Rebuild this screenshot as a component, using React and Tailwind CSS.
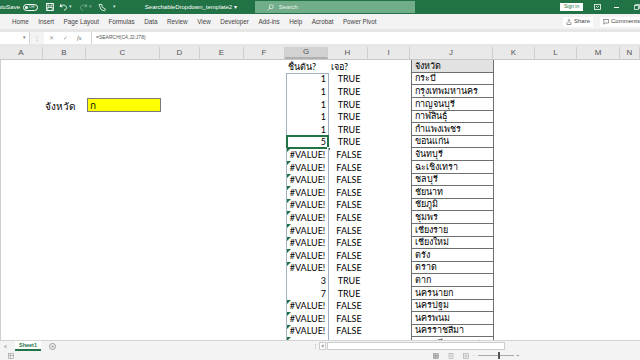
import React from 'react'

const cols = [
  { id: 'A', w: 'w-[43px]' },
  { id: 'B', w: 'w-[43px]' },
  { id: 'C', w: 'w-[74px]' },
  { id: 'D', w: 'w-[40px]' },
  { id: 'E', w: 'w-[44px]' },
  { id: 'F', w: 'w-[41px]' },
  { id: 'G', w: 'w-[43px]' },
  { id: 'H', w: 'w-[40px]' },
  { id: 'I', w: 'w-[42px]' },
  { id: 'J', w: 'w-[83px]' },
  { id: 'K', w: 'w-[42px]' },
  { id: 'L', w: 'w-[42px]' },
  { id: 'M', w: 'w-[43px]' },
  { id: 'N', w: 'w-[20px]' },
]

const V = '#VALUE!'
const rows = [
  [null, null, 'จังหวัด'],
  ['1', 'TRUE', 'กระบี่'],
  ['1', 'TRUE', 'กรุงเทพมหานคร'],
  ['1', 'TRUE', 'กาญจนบุรี'],
  ['1', 'TRUE', 'กาฬสินธุ์'],
  ['1', 'TRUE', 'กำแพงเพชร'],
  ['5', 'TRUE', 'ขอนแก่น'],
  [V, 'FALSE', 'จันทบุรี'],
  [V, 'FALSE', 'ฉะเชิงเทรา'],
  [V, 'FALSE', 'ชลบุรี'],
  [V, 'FALSE', 'ชัยนาท'],
  [V, 'FALSE', 'ชัยภูมิ'],
  [V, 'FALSE', 'ชุมพร'],
  [V, 'FALSE', 'เชียงราย'],
  [V, 'FALSE', 'เชียงใหม่'],
  [V, 'FALSE', 'ตรัง'],
  [V, 'FALSE', 'ตราด'],
  ['3', 'TRUE', 'ตาก'],
  ['7', 'TRUE', 'นครนายก'],
  [V, 'FALSE', 'นครปฐม'],
  [V, 'FALSE', 'นครพนม'],
  [V, 'FALSE', 'นครราชสีมา'],
  [V, 'FALSE', 'นครศรีธรรมราช'],
]

// row heights average ~12.6px like the zoomed-down sheet
const heights = ['h-[13px]', 'h-[12px]', 'h-[13px]', 'h-[13px]', 'h-[12px]']

function TitleBar() {
  return (
    <div className="h-[14px] bg-[#217346] flex items-center text-white text-[6px] shrink-0">
      <span className="-ml-[6px]">AutoSave</span>
      <div className="ml-[3px] w-[15px] h-[7px] rounded-full border border-white flex items-center pl-[1px] gap-[1px]">
        <div className="w-[3px] h-[3px] rounded-full bg-white" />
        <span className="text-[4px] leading-none">Off</span>
      </div>
      <svg className="ml-[8px]" width="8" height="8" viewBox="0 0 8 8" fill="none" stroke="white" strokeWidth="0.8">
        <rect x="0.5" y="0.5" width="7" height="7" />
        <rect x="2" y="0.5" width="4" height="2.5" />
        <rect x="1.8" y="4.5" width="4.4" height="3" />
      </svg>
      <svg className="ml-[5px]" width="9" height="8" viewBox="0 0 9 8" fill="none" stroke="white" strokeWidth="0.9">
        <path d="M2 1 L1 3.5 L3.6 3.8" />
        <path d="M1.3 3.4 C3 1.5 7 1.5 7.5 4.5 C7.6 6 6.5 7 5 7.2" />
      </svg>
      <span className="text-[5px] ml-[1px] opacity-80">▾</span>
      <svg className="ml-[7px] opacity-40" width="9" height="8" viewBox="0 0 9 8" fill="none" stroke="white" strokeWidth="0.9">
        <path d="M7 1 L8 3.5 L5.4 3.8" />
        <path d="M7.7 3.4 C6 1.5 2 1.5 1.5 4.5 C1.4 6 2.5 7 4 7.2" />
      </svg>
      <span className="text-[5px] ml-[1px] opacity-40">▾</span>
      <svg className="ml-[6px]" width="9" height="9" viewBox="0 0 9 9" fill="none" stroke="white" strokeWidth="0.8">
        <path d="M1 1.5 L4 1.5 L4 4 L7.5 6 L6.5 8 L3 6.5 L2 4 Z" />
      </svg>
      <span className="text-[5px] ml-[6px] opacity-80">▾</span>
      <div className="ml-[29px] w-[90px] text-[6px] whitespace-nowrap">SearchableDropdown_template2 ▾</div>
      <div className="ml-[20px] w-[161px] h-[12px] bg-[#72ad89] flex items-center pl-[12px] text-[#e9f3ec]">
        <svg width="7" height="7" viewBox="0 0 7 7" fill="none" stroke="#e9f3ec" strokeWidth="0.8">
          <circle cx="4.3" cy="2.7" r="2" />
          <path d="M2.9 4.1 L0.6 6.4" />
        </svg>
        <span className="ml-[5px] text-[6px]">Search</span>
      </div>
      <div className="ml-[145px] w-[23px] h-[8px] bg-white text-[#217346] text-[5px] flex items-center justify-center">Sign in</div>
      <svg className="ml-[11px]" width="7" height="6" viewBox="0 0 7 6" fill="none" stroke="white" strokeWidth="0.8">
        <rect x="0.5" y="0.5" width="6" height="5" />
        <path d="M2 2 L3.5 3.5 L5 2" />
      </svg>
      <div className="ml-[13px] w-[5px] h-[1px] bg-white" />
      <svg className="ml-[15px]" width="6" height="6" viewBox="0 0 6 6" fill="none" stroke="white" strokeWidth="0.7">
        <rect x="0.5" y="1.5" width="4" height="4" />
        <path d="M1.5 1.5 V0.5 H5.5 V4.5 H4.5" />
      </svg>
    </div>
  )
}

function RibbonTabs() {
  const tabs = ['Home', 'Insert', 'Page Layout', 'Formulas', 'Data', 'Review', 'View', 'Developer', 'Add-ins', 'Help', 'Acrobat', 'Power Pivot']
  return (
    <div className="h-[15px] bg-[#f3f3f3] flex items-center text-[6.3px] text-[#444] shrink-0">
      <div className="flex pl-[12px] gap-[9.5px]">
        {tabs.map(t => (
          <span key={t} className="whitespace-nowrap">{t}</span>
        ))}
      </div>
      <div className="ml-auto flex items-center gap-[7px]">
        <div className="h-[10px] px-[3px] bg-white flex items-center gap-[2px] text-[6px]">
          <svg width="6" height="6" viewBox="0 0 6 6" fill="none" stroke="#555" strokeWidth="0.6">
            <path d="M1 3 V5.5 H5 V3" />
            <path d="M3 4 V0.6 M1.8 1.8 L3 0.6 L4.2 1.8" />
          </svg>
          Share
        </div>
        <div className="h-[10px] pl-[3px] bg-white flex items-center gap-[2px] text-[6px] whitespace-nowrap">
          <svg width="6" height="6" viewBox="0 0 6 6" fill="none" stroke="#555" strokeWidth="0.6">
            <path d="M0.5 0.5 H5.5 V4 H2 L0.8 5.3 V0.5 Z" />
          </svg>
          Comments
        </div>
      </div>
    </div>
  )
}

function FormulaBar() {
  return (
    <div className="shrink-0 bg-[#e6e6e6] pt-[3px] pb-[3px]">
      <div className="h-[12px] flex items-center bg-white text-[#555]">
        <div className="w-[30px] h-full flex items-center justify-end pr-[3px] border-r border-[#d4d4d4] text-[5px] text-[#777]">▾</div>
        <div className="w-[14px] h-full bg-[#f3f3f3] flex items-center justify-center text-[6px] text-[#aaa]">⋮</div>
        <div className="w-[48px] h-full flex items-center pl-[5px] gap-[9px] text-[6px] text-[#999] border-r border-[#d4d4d4]">
          <span>✕</span>
          <span>✓</span>
          <span className="italic text-[#666] font-['Liberation_Serif',serif]">fx</span>
        </div>
        <span className="ml-[4px] text-[5px] text-[#555]">=SEARCH(C4,J2:J78)</span>
      </div>
    </div>
  )
}

function ColumnHeaders() {
  return (
    <div className="h-[13px] flex bg-[#e9e9e9] border-b border-[#c8c8c8] shrink-0">
      {cols.map(c => (
        <div
          key={c.id}
          className={`${c.w} shrink-0 h-full flex items-center justify-center text-[8px] text-[#555] border-r border-[#cfcfcf] ${c.id === 'G' ? 'bg-[#d2d2d2] border-b-2 border-b-[#b0b0b0]' : ''}`}
        >
          {c.id}
        </div>
      ))}
    </div>
  )
}

function ErrTri() {
  return <div className="absolute top-0 left-0 w-0 h-0 border-t-[4px] border-t-[#1e7145] border-r-[4px] border-r-transparent" />
}

function Grid() {
  return (
    <div className="flex-1 overflow-hidden bg-white border-l border-[#cfcfcf] text-[9px] text-black font-['Lato','Liberation_Sans',sans-serif]">
      {rows.map((r, i) => {
        const [g, h, j] = r
        const isHead = i === 0
        const isErr = g === V
        const active = i === 6
        return (
          <div key={i} className={`flex items-end ${heights[i % 5]}`}>
            <div className="w-[43px] shrink-0 h-full" />
            <div className="w-[43px] shrink-0 h-full relative">
              {i === 3 && (
                <span className="absolute right-[12px] bottom-[-1px] leading-[12px] whitespace-nowrap text-[10px]">จังหวัด</span>
              )}
            </div>
            <div className="w-[74px] shrink-0 h-full relative">
              {i === 3 && (
                <div className="absolute inset-x-0 top-0 h-[14px] bg-[#ffff00] border border-[#7a7a7a] pl-[2px] leading-[13px] text-[10px]">ก</div>
              )}
            </div>
            <div className="w-[40px] shrink-0 h-full" />
            <div className="w-[44px] shrink-0 h-full" />
            <div className="w-[41px] shrink-0 h-full" />
            <div
              className={`w-[43px] shrink-0 h-full relative flex items-end whitespace-nowrap ${isHead ? 'pl-[2px]' : 'border-x border-[#9fb1c4]'} ${i === 1 ? 'border-t border-t-[#9fb1c4]' : ''} ${isErr ? 'justify-center' : isHead ? 'justify-start' : 'justify-end pr-[2px]'}`}
            >
              <span className="leading-[12px]">{isHead ? 'ชื่นต้น?' : g}</span>
              {isErr && <ErrTri />}
              {active && <div className="absolute -inset-x-[1px] -top-[1px] -bottom-[1px] border-2 border-[#217346]" />}
              {active && <div className="absolute right-[-3px] bottom-[-3px] w-[4px] h-[4px] bg-[#217346] border border-white" />}
            </div>
            <div className={`w-[40px] shrink-0 h-full flex items-end whitespace-nowrap ${isHead ? 'pl-[2px]' : 'justify-center'}`}>
              <span className="leading-[12px]">{isHead ? 'เจอ?' : h}</span>
            </div>
            <div className="w-[42px] shrink-0 h-full" />
            <div
              className={`w-[83px] shrink-0 h-full flex items-end whitespace-nowrap overflow-hidden pl-[3px] border border-t-0 border-[#6f6f6f] ${isHead ? 'bg-[#e2e2e2] border-t' : ''}`}
            >
              <span className="leading-[12px]">{j}</span>
            </div>
            <div className="w-[42px] shrink-0 h-full" />
          </div>
        )
      })}
    </div>
  )
}

function SheetTabs() {
  return (
    <div className="h-[11px] bg-[#f3f3f3] flex items-center shrink-0 border-t border-[#d4d4d4]">
      <svg className="ml-[3px]" width="4" height="5" viewBox="0 0 4 5" fill="#bbb">
        <path d="M3.5 0.5 L0.5 2.5 L3.5 4.5 Z" />
      </svg>
      <div className="ml-[8px] w-[26px] h-full bg-white flex items-center justify-center text-[5.5px] font-bold text-[#217346] border-b-2 border-[#217346]">Sheet1</div>
      <div className="ml-[8px] w-[7px] h-[7px] rounded-full border border-[#999] flex items-center justify-center text-[6px] leading-none text-[#777]">+</div>
      <div className="ml-[259px] flex flex-col gap-[1px]">
        <div className="w-[1px] h-[1px] bg-[#bbb]" />
        <div className="w-[1px] h-[1px] bg-[#bbb]" />
        <div className="w-[1px] h-[1px] bg-[#bbb]" />
      </div>
      <div className="ml-[3px] w-[7px] h-[8px] bg-white border border-[#ccc] flex items-center justify-center">
        <svg width="3" height="4" viewBox="0 0 3 4" fill="#888">
          <path d="M2.5 0.3 L0.3 2 L2.5 3.7 Z" />
        </svg>
      </div>
      <div className="ml-[1px] w-[178px] h-[8px] bg-white border border-[#ccc]" />
    </div>
  )
}

function StatusBar() {
  return (
    <div className="h-[9px] bg-[#f3f3f3] flex items-center shrink-0">
      <svg className="ml-[8px]" width="6" height="6" viewBox="0 0 6 6" fill="none" stroke="#999" strokeWidth="0.6">
        <rect x="0.5" y="0.5" width="5" height="5" />
        <path d="M0.5 2.5 H5.5 M2.5 0.5 V5.5" />
      </svg>
      <div className="ml-[419px] flex items-center gap-[9px]">
        <svg width="6" height="6" viewBox="0 0 6 6" fill="#c9c9c9" stroke="#888" strokeWidth="0.5">
          <rect x="0.5" y="0.5" width="5" height="5" />
          <path d="M0.5 2.5 H5.5 M0.5 4 H5.5 M2.5 0.5 V5.5" />
        </svg>
        <svg width="6" height="6" viewBox="0 0 6 6" fill="none" stroke="#999" strokeWidth="0.5">
          <rect x="1" y="0.5" width="4" height="5" />
          <path d="M1.8 2 H4.2 M1.8 3.5 H4.2" />
        </svg>
        <svg width="6" height="6" viewBox="0 0 6 6" fill="none" stroke="#999" strokeWidth="0.5">
          <rect x="0.5" y="0.5" width="5" height="5" />
          <path d="M3 0.5 V5.5 M0.5 3 H5.5" />
        </svg>
      </div>
      <span className="ml-[4px] text-[6px] text-[#999]">-</span>
      <div className="ml-[3px] w-[36px] h-[1px] bg-[#aaa] relative">
        <div className="absolute left-[20px] -top-[3px] w-[2px] h-[7px] bg-[#555]" />
      </div>
      <span className="ml-[2px] text-[6px] text-[#999]">+</span>
    </div>
  )
}

export default function App() {
  return (
    <div className="w-[640px] h-[360px] overflow-hidden flex flex-col bg-white font-['Liberation_Sans','Noto_Sans',sans-serif]">
      <TitleBar />
      <RibbonTabs />
      <FormulaBar />
      <ColumnHeaders />
      <Grid />
      <SheetTabs />
      <StatusBar />
    </div>
  )
}
